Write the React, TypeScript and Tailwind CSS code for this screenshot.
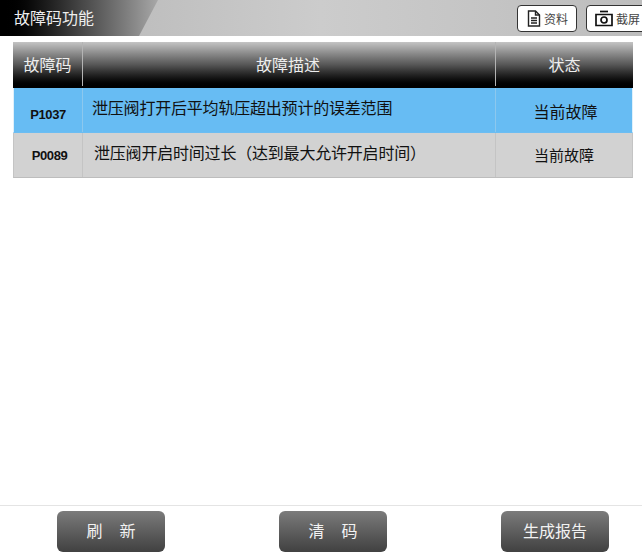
const font = { fontFamily: '"Noto Sans CJK SC", "Liberation Sans", sans-serif' }

const DocIcon = () => (
    <svg width="14" height="17" viewBox="0 0 14 17" fill="none" stroke="#222" strokeWidth="1.4">
        <path d="M1.5 1h7l4 4v11h-11z" />
        <path d="M8.5 1v4h4M4 8h6M4 10.5h6M4 13h6" />
    </svg>
)

const CameraIcon = () => (
    <svg width="18" height="17" viewBox="0 0 18 17" fill="none" stroke="#111" strokeWidth="1.7">
        <path d="M1 4.5h16v11h-16z" />
        <path d="M5 1.5h8" />
        <circle cx="9" cy="10" r="3" />
    </svg>
)

const TopButton = ({ label, children, className }: { label: string; children: React.ReactNode; className: string }) => (
    <div className={`flex h-[27px] items-center rounded-[4px] border border-[#333] bg-white ${className}`}>
        {children}
        <span className="text-[12px] leading-none text-[#444]">{label}</span>
    </div>
)

const ActionButton = ({ label, spaced }: { label: string; spaced?: boolean }) => (
    <button className={`flex h-[41px] w-[108px] items-center justify-center rounded-[6px] bg-gradient-to-b from-[#7c7c7c] to-[#414141] pb-[3px] text-[16px] text-[#f2f2f2] ${spaced ? 'gap-[17px]' : ''}`}>
        {spaced ? label.split(' ').map((c) => <span key={c}>{c}</span>) : label}
    </button>
)

const rows = [
    { code: 'P1037', desc: '泄压阀打开后平均轨压超出预计的误差范围', status: '当前故障', active: true },
    { code: 'P0089', desc: '泄压阀开启时间过长（达到最大允许开启时间）', status: '当前故障', active: false }
]

const App = () => (
    <div style={font} className="flex h-[555px] w-[642px] flex-col overflow-hidden bg-white">
        <header className="flex h-[36px] shrink-0 items-center bg-gradient-to-r from-[#b4b4b4] via-[#cccccc] to-[#bdbdbd]">
            <div className="flex h-full w-[158px] items-center bg-gradient-to-r from-[#000000] via-[#444444] to-[#a8a8a8] pb-[2px] pl-[14px] text-[16px] text-[#eeeeee] [clip-path:polygon(0_0,100%_0,139px_100%,0_100%)]">
                故障码功能
            </div>
            <div className="ml-auto flex w-[125px] shrink-0 gap-[9px] overflow-hidden pt-px">
                <TopButton label="资料" className="w-[60px] shrink-0 gap-[3px] pl-[9px]">
                    <DocIcon />
                </TopButton>
                <TopButton label="截屏" className="w-[70px] shrink-0 gap-[3px] pl-[8px]">
                    <CameraIcon />
                </TopButton>
            </div>
        </header>

        <main className="mx-[13px] mt-[6px] w-[620px]">
            <div className="flex h-[46px] bg-gradient-to-b from-[#c4c4c4] via-[#555555] to-[#000000] pb-[2px] text-[16px] text-[#eeeeee]">
                <div className="flex w-[70px] items-center justify-center border-r border-[#b4b4b4]">故障码</div>
                <div className="flex w-[413px] items-center justify-center border-r border-[#b4b4b4] pr-[2px]">故障描述</div>
                <div className="flex flex-1 items-center justify-center">状态</div>
            </div>
            {rows.map((row) => (
                <div
                    key={row.code}
                    className={`flex h-[45px] border-x border-b text-[#111] ${row.active ? 'border-x-[#dff0fb] border-b-[#6cbdf2] bg-[#67bcf3]' : 'border-x-[#c4c4c4] border-b-[#bdbdbd] bg-[#d2d2d2]'}`}
                >
                    <div
                        style={{ fontFamily: '"Liberation Sans", sans-serif' }}
                        className={`flex w-[69px] items-center justify-center border-r text-[13px] font-bold tracking-[-0.4px] ${row.active ? 'border-[#8cc8ee] pt-[10px]' : 'border-[#c4c4c4] pt-[2px] pl-[3px]'}`}
                    >
                        {row.code}
                    </div>
                    <div className={`flex w-[413px] items-center border-r pb-[6px] text-[16px] tracking-[-0.2px] ${row.active ? 'border-[#8cc8ee] pl-[9px]' : 'border-[#c4c4c4] pl-[11px]'}`}>
                        {row.desc}
                    </div>
                    <div className={`flex flex-1 items-center justify-center ${row.active ? 'pl-[3px] pt-[1px] text-[16px]' : 'text-[15px]'}`}>{row.status}</div>
                </div>
            ))}
        </main>

        <footer className="mt-auto flex h-[50px] gap-[114px] border-t border-[#e4e4e4] pl-[57px] pt-[5px]">
            <ActionButton label="刷 新" spaced />
            <ActionButton label="清 码" spaced />
            <ActionButton label="生成报告" />
        </footer>
    </div>
)

export default App
